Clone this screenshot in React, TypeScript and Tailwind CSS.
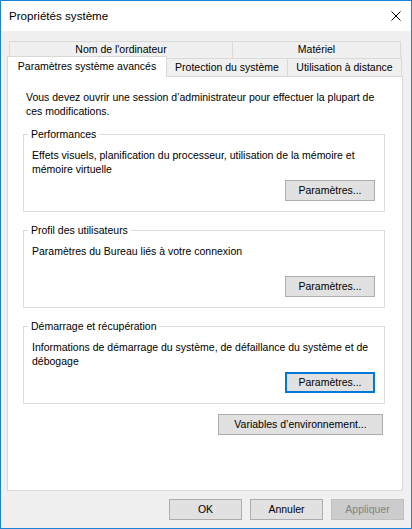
import React from "react";

const Button = ({
  label,
  className = "",
  focused = false,
  disabled = false,
}: {
  label: string;
  className?: string;
  focused?: boolean;
  disabled?: boolean;
}) => {
  const look = disabled
    ? "bg-[#cccccc] border border-[#bfbfbf] text-[#838383]"
    : focused
    ? "bg-[#e1e1e1] border-2 border-[#0078d7] text-black"
    : "bg-[#e1e1e1] border border-[#adadad] text-black";
  return (
    <button
      type="button"
      disabled={disabled}
      className={`h-[21px] flex items-center justify-center leading-none ${look} ${className}`}
    >
      {label}
    </button>
  );
};

const Group = ({
  title,
  text,
  focused = false,
}: {
  title: string;
  text: string;
  focused?: boolean;
}) => (
  <fieldset className="w-[362px] border border-[#dcdcdc] pl-[8px] pr-[9px] pt-[7px] pb-[10px]">
    <legend className="-ml-[4px] px-[3px] leading-[14px]">{title}</legend>
    <p className="h-[28px] leading-[14px]">{text}</p>
    <div className="mt-[4px] flex justify-end">
      <Button label="Paramètres..." focused={focused} className="w-[90px]" />
    </div>
  </fieldset>
);

export default function App() {
  return (
    <div className="w-[412px] h-[529px] border border-[#1883d7] bg-[#f0f0f0] flex flex-col font-['Liberation_Sans',Arial,sans-serif] text-[10.5px] text-black select-none">
      {/* title bar */}
      <div className="h-[30px] shrink-0 bg-white flex items-center justify-between pl-[8px] pr-[10px]">
        <span className="text-[11.6px]">Propriétés système</span>
        <svg width="10" height="10" viewBox="0 0 10 10" className="mb-[1px]">
          <path d="M0.5 0.5 L9.5 9.5 M9.5 0.5 L0.5 9.5" stroke="#000" strokeWidth="1" />
        </svg>
      </div>

      <div className="pt-[10px]">
        {/* back row of tabs */}
        <div className="ml-[8px] flex h-[17px] w-[392px]">
          <div className="w-[223px] border-t border-l border-[#d9d9d9] flex items-center justify-center">
            Nom de l'ordinateur
          </div>
          <div className="w-[169px] border-t border-l border-r border-[#d9d9d9] flex items-center justify-center">
            Matériel
          </div>
        </div>

        {/* front row of tabs */}
        <div className="ml-[6px] flex items-end h-[18px]">
          <div className="relative z-10 w-[160px] h-[21px] mb-[-1px] bg-white border-t border-l border-r border-[#d9d9d9] flex justify-center pt-[2px] leading-[14px]">
            Paramètres système avancés
          </div>
          <div className="w-[121px] h-[18px] border-t border-r border-[#d9d9d9] flex items-center justify-center">
            Protection du système
          </div>
          <div className="w-[114px] h-[18px] border-t border-r border-[#d9d9d9] flex items-center justify-center">
            Utilisation à distance
          </div>
        </div>

        {/* tab page */}
        <div className="ml-[6px] w-[396px] h-[415px] bg-white border border-[#d9d9d9] flex flex-col px-[15px] pt-[13px]">
          <p className="ml-[3px] pr-[3px] leading-[14px]">
            Vous devez ouvrir une session d’administrateur pour effectuer la plupart de ces modifications.
          </p>
          <div className="mt-[9px] flex flex-col gap-[11px]">
            <Group
              title="Performances"
              text="Effets visuels, planification du processeur, utilisation de la mémoire et mémoire virtuelle"
            />
            <Group title="Profil des utilisateurs" text="Paramètres du Bureau liés à votre connexion" />
            <Group
              title="Démarrage et récupération"
              text="Informations de démarrage du système, de défaillance du système et de débogage"
              focused
            />
          </div>
          <div className="w-[362px] mt-[10px] flex justify-end pr-[2px]">
            <Button label="Variables d’environnement..." className="w-[165px]" />
          </div>
        </div>

        {/* dialog buttons */}
        <div className="mt-[8px] flex justify-end gap-[8px] pr-[7px]">
          <Button label="OK" className="w-[73px]" />
          <Button label="Annuler" className="w-[73px]" />
          <Button label="Appliquer" className="w-[73px]" disabled />
        </div>
      </div>
    </div>
  );
}
